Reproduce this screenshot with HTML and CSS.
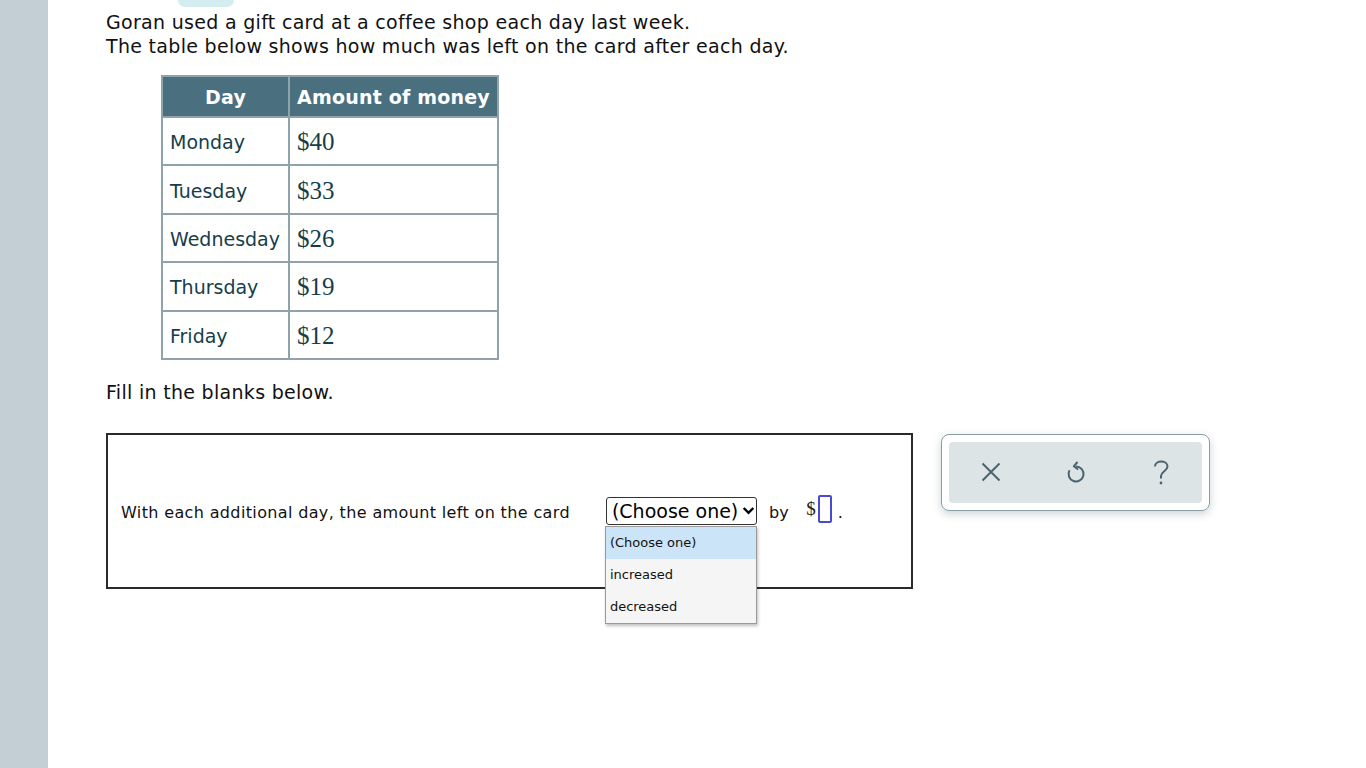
FILE: index.html
```html
<!DOCTYPE html>
<html>
<head>
<meta charset="utf-8">
<link rel="stylesheet" href="styles.css">
</head>
<body>
<div class="page">
  <aside class="sidebar"></aside>
  <main class="main">
    <div class="tab"></div>
    <p class="intro">Goran used a gift card at a coffee shop each day last week.<br>The table below shows how much was left on the card after each day.</p>
    <table class="data">
      <thead>
        <tr><th class="c-day">Day</th><th class="c-amt">Amount of money</th></tr>
      </thead>
      <tbody>
        <tr><td class="day">Monday</td><td class="amt">$40</td></tr>
        <tr><td class="day">Tuesday</td><td class="amt">$33</td></tr>
        <tr><td class="day">Wednesday</td><td class="amt">$26</td></tr>
        <tr><td class="day">Thursday</td><td class="amt">$19</td></tr>
        <tr><td class="day">Friday</td><td class="amt">$12</td></tr>
      </tbody>
    </table>
    <p class="fill">Fill in the blanks below.</p>
    <div class="work">
      <div class="answer">
        <div class="sentence">
          <span class="lead">With each additional day, the amount left on the card</span>
          <span class="select-wrap">
            <span class="select"><span class="sel-text">(Choose one)</span><svg class="chev" viewBox="0 0 14 9" width="13" height="9"><path d="M1.8 1.8 L7 7 L12.2 1.8" fill="none" stroke="#000" stroke-width="2.6"/></svg></span>
            <span class="menu">
              <span class="opt sel">(Choose one)</span>
              <span class="opt">increased</span>
              <span class="opt">decreased</span>
            </span>
          </span>
          <span class="by">by</span>
          <span class="dollar">$</span><span class="blank"></span><span class="dot">.</span>
        </div>
      </div>
      <div class="tools">
        <div class="tools-inner">
          <svg class="ico" viewBox="0 0 28 28" width="28" height="28"><path d="M5.5 5.5 L22.5 22.5 M22.5 5.5 L5.5 22.5" stroke="#4b6470" stroke-width="2" fill="none"/></svg>
          <svg class="ico" viewBox="0 0 28 28" width="28" height="28"><path d="M14 8.5 A7.5 7.5 0 1 1 7.5 12.3" stroke="#4b6470" stroke-width="2" fill="none"/><path d="M15 4.5 L11.8 8.3 L15.5 11" stroke="#4b6470" stroke-width="2" fill="none" stroke-linejoin="round" stroke-linecap="round"/></svg>
          <svg class="ico" viewBox="0 0 28 28" width="28" height="28"><path d="M8 8.5 C8 1.8 20.5 1.8 20.5 8.5 C20.5 13 14 13.5 14 18 L14 20.5" stroke="#4b6470" stroke-width="2" fill="none"/><circle cx="14" cy="25" r="1.4" fill="#4b6470"/></svg>
        </div>
      </div>
    </div>
  </main>
</div>
</body>
</html>
```

FILE: styles.css
```css
html, body {
  margin: 0;
  padding: 0;
  background: #ffffff;
}
.page {
  display: flex;
  min-height: 768px;
  font-family: "DejaVu Sans", Verdana, sans-serif;
  color: #000;
}
.sidebar {
  width: 48px;
  flex: 0 0 48px;
  background: #c3cfd4;
}
.main {
  flex: 1;
  padding-left: 58px;
}
.tab {
  width: 56px;
  height: 7px;
  margin-left: 72px;
  background: #d4edf1;
  border-radius: 0 0 9px 9px;
}
.intro {
  margin: 3px 0 0 0;
  font-size: 19px;
  line-height: 24px;
  letter-spacing: 0.3px;
  color: #111;
}
.data {
  border-collapse: collapse;
  margin: 17px 0 0 55px;
  border: 2px solid #8fa3ab;
}
.data th {
  background: #4a7080;
  color: #fff;
  font-weight: bold;
  font-size: 19px;
  height: 39px;
  padding: 0 7px;
  border: 2px solid #8fa3ab;
  text-align: center;
  letter-spacing: 0.2px;
}
.data th.c-day { width: 111px; }
.data th.c-amt { width: 193px; }
.data td {
  border: 2px solid #8fa3ab;
  height: 44.4px;
  padding: 2px 7px 0 7px;
  color: #173e48;
}
.data td.day {
  font-size: 19px;
}
.data td.amt {
  font-family: "Liberation Serif", "Times New Roman", serif;
  font-size: 25px;
}
.fill {
  margin: 20px 0 0 0;
  font-size: 19px;
  line-height: 24px;
  letter-spacing: 0.3px;
  color: #111;
}
.work {
  display: flex;
  align-items: flex-start;
  gap: 28px;
  margin-top: 29px;
}
.answer {
  width: 803px;
  height: 152px;
  border: 2px solid #2a2a2a;
  display: flex;
  align-items: center;
}
.sentence {
  display: flex;
  align-items: center;
  padding-left: 13px;
  font-size: 16px;
  color: #111;
}
.lead {
  letter-spacing: 0.36px;
  margin-right: 36px;
  padding-top: 4px;
}
.select-wrap {
  position: relative;
  display: inline-block;
}
.select {
  display: flex;
  align-items: center;
  justify-content: space-between;
  box-sizing: border-box;
  width: 151px;
  height: 28px;
  padding: 0 1px 0 5px;
  border: 1px solid #333;
  border-radius: 3px;
  font-size: 19px;
  color: #000;
  background: #fff;
  white-space: nowrap;
  overflow: hidden;
}
.sel-text {
  white-space: nowrap;
}
.chev {
  flex: 0 0 auto;
  margin-left: 1px;
}
.menu {
  position: absolute;
  left: -1px;
  top: 29px;
  width: 152px;
  box-sizing: border-box;
  display: flex;
  flex-direction: column;
  background: #f5f5f5;
  border: 1px solid #9a9a9a;
  box-shadow: 1px 2px 3px rgba(0,0,0,0.25);
  z-index: 5;
}
.opt {
  height: 32px;
  line-height: 32px;
  padding-left: 4px;
  font-size: 13px;
  color: #111;
}
.opt.sel {
  background: #cce4f7;
}
.by {
  margin-left: 12px;
  letter-spacing: 0.3px;
  padding-top: 4px;
}
.dollar {
  margin-left: 17px;
  font-family: "Liberation Serif", "Times New Roman", serif;
  font-size: 19px;
  color: #222;
  position: relative;
  top: -2px;
}
.blank {
  display: inline-block;
  width: 10px;
  height: 24px;
  border: 2px solid #4a4ad0;
  border-radius: 2px;
  margin-left: 2px;
  position: relative;
  top: -2px;
}
.dot {
  margin-left: 6px;
  font-size: 16px;
  padding-top: 4px;
}
.tools {
  margin-top: 1px;
  border: 1px solid #8a9ea6;
  border-radius: 8px;
  box-shadow: 0 3px 8px rgba(60,80,90,0.25);
  padding: 7px;
  width: 253px;
  height: 61px;
}
.tools-inner {
  height: 61px;
  background: #dde4e6;
  border-radius: 4px;
  display: flex;
  align-items: center;
  justify-content: center;
  gap: 57px;
}
.ico {
  display: block;
}
```
